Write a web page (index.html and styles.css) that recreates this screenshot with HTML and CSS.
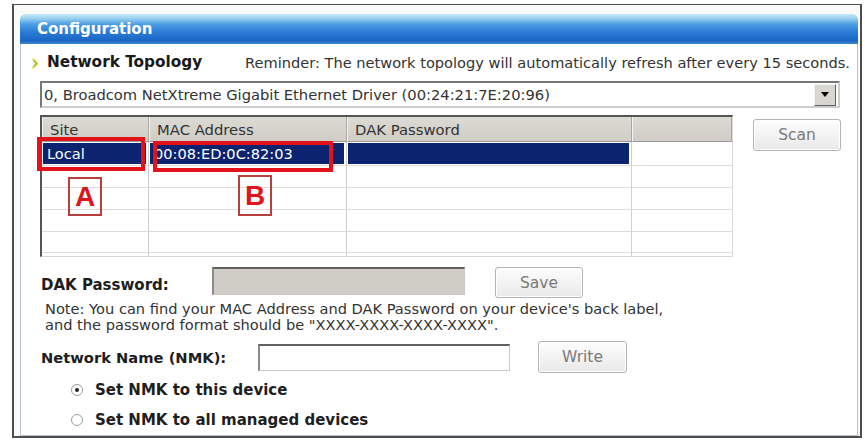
FILE: index.html
```
<!DOCTYPE html>
<html>
<head>
<meta charset="utf-8">
<link rel="stylesheet" href="styles.css">
</head>
<body>
<div class="frame">
  <div class="panel">
    <div class="bar"><span class="bar-title">Configuration</span></div>
    <div class="content">
      <div class="topo-row">
        <svg class="chev" width="9" height="13" viewBox="0 0 9 13"><path d="M1.5 1.5 L6 6.5 L1.5 11.5" fill="none" stroke="#dce670" stroke-width="2.6"/><path d="M2.5 3.5 L5.5 6.5 L2.5 9.5" fill="none" stroke="#9cb82a" stroke-width="1.4"/></svg>
        <span class="topo-title">Network Topology</span>
        <span class="reminder">Reminder: The network topology will automatically refresh after every 15 seconds.</span>
      </div>
      <div class="select">
        <span class="select-text">0, Broadcom NetXtreme Gigabit Ethernet Driver (00:24:21:7E:20:96)</span>
        <span class="select-btn"><span class="tri"></span></span>
      </div>
      <div class="table-area">
        <div class="grid-wrap">
          <div class="grid">
            <div class="hcell">Site</div>
            <div class="hcell">MAC Address</div>
            <div class="hcell">DAK Password</div>
            <div class="hcell"></div>
            <div class="cell sel first"><div class="fill">Local</div></div>
            <div class="cell sel first"><div class="fill">00:08:ED:0C:82:03</div></div>
            <div class="cell sel first"><div class="fill"></div></div>
            <div class="cell first"></div>
            <div class="cell"></div><div class="cell"></div><div class="cell"></div><div class="cell"></div>
            <div class="cell"></div><div class="cell"></div><div class="cell"></div><div class="cell"></div>
            <div class="cell"></div><div class="cell"></div><div class="cell"></div><div class="cell"></div>
            <div class="cell"></div><div class="cell"></div><div class="cell"></div><div class="cell"></div>
            <div class="cell last"></div><div class="cell last"></div><div class="cell last"></div><div class="cell last"></div>
          </div>
          <div class="mark mark-a"></div>
          <div class="mark mark-b"></div>
          <div class="tag tag-a">A</div>
          <div class="tag tag-b">B</div>
        </div>
        <div class="btn btn-scan">Scan</div>
      </div>
      <div class="dak-row">
        <span class="label">DAK Password:</span>
        <span class="input input-dak"></span>
        <span class="btn btn-save">Save</span>
      </div>
      <div class="note">
        <div>Note: You can find your MAC Address and DAK Password on your device's back label,</div>
        <div>and the password format should be "XXXX-XXXX-XXXX-XXXX".</div>
      </div>
      <div class="nmk-row">
        <span class="label">Network Name (NMK):</span>
        <span class="input input-nmk"></span>
        <span class="btn btn-write">Write</span>
      </div>
      <div class="radios">
        <div class="radio-row"><span class="radio on"></span><span class="radio-text">Set NMK to this device</span></div>
        <div class="radio-row"><span class="radio"></span><span class="radio-text">Set NMK to all managed devices</span></div>
      </div>
    </div>
  </div>
</div>
</body>
</html>
```
FILE: styles.css
```
* { box-sizing: border-box; }
html, body { margin: 0; padding: 0; background: #fff; }
body {
  width: 865px; height: 440px; overflow: hidden;
  font-family: "DejaVu Sans", sans-serif;
  color: #2a2a2a;
}
.frame {
  margin: 4px 0 0 12px;
  width: 850px; height: 434px;
  border: 2px solid #4e4e4e;
  border-top-width: 1px;
  padding: 9px 2px 0 6px;
  background: #fafafa;
}
.panel {
  height: 100%;
  border: 1px solid #b9c3cd;
  border-top: none;
  border-radius: 6px 6px 0 0;
  background: #fff;
  display: flex; flex-direction: column;
}
.bar {
  height: 31px;
  margin: 0 -1px;
  border-radius: 6px 6px 0 0;
  background: linear-gradient(to bottom, #c4e8f8 0%, #9dd2f0 14%, #4c9ee4 34%, #2b7cd6 60%, #1a66c6 88%, #3f86cc 100%);
  display: flex; align-items: center;
  padding-left: 17px;
}
.bar-title { color: #fff; font-weight: bold; font-size: 15px; }
.content { padding-left: 10px; display: flex; flex-direction: column; }
.topo-row {
  margin-top: 7px; height: 22px;
  display: flex; align-items: center;
}
.chev { margin-top: 2px; }
.topo-title { margin-left: 7px; width: 198px; font-weight: bold; font-size: 15.3px; color: #1a1a1a; }
.reminder { font-size: 14.6px; color: #333; white-space: nowrap; }
.select {
  margin: 8px 0 0 9px; width: 800px; height: 27px;
  border: 2px solid #777; border-right-color: #ccc; border-bottom-color: #ccc;
  display: flex; align-items: center; justify-content: space-between;
  padding: 0 2px 0 2px;
}
.select-text { font-size: 14.7px; color: #333; }
.select-btn {
  width: 22px; height: 22px;
  background: #d8d6d0;
  border: 1px solid #f4f4f4; border-right-color: #606060; border-bottom-color: #606060;
  display: flex; align-items: center; justify-content: center;
}
.tri { width: 0; height: 0; border-left: 4px solid transparent; border-right: 4px solid transparent; border-top: 5px solid #000; }
.table-area { margin: 7px 0 0 9px; display: flex; align-items: flex-start; gap: 20px; }
.grid-wrap {
  position: relative; width: 693px; height: 142px;
  border-left: 2px solid #555; border-top: 2px solid #555;
  border-right: 1px solid #d8d8d8; border-bottom: 1px solid #d8d8d8;
}
.grid {
  display: grid; grid-template-columns: 107px 198px 285px 1fr;
  grid-template-rows: 25px 24px 22px 22px 22px 21px 1fr;
  height: 100%; overflow: hidden;
}
.hcell {
  background: linear-gradient(#dcdad4, #d0cdc6);
  border-right: 1px solid #a8a6a0; border-left: 1px solid #f2f2f2;
  border-bottom: 1px solid #9a9a9a;
  font-size: 14.8px; color: #333;
  display: flex; align-items: center; padding-left: 7px;
}
.cell { border-right: 1px solid #cfcfcf; border-bottom: 1px solid #dcdcdc; }
.cell:nth-child(4n) { border-right: none; }
.cell.last { border-bottom: none; }
.cell.sel { padding: 1px 2px 1px 1px; }
.fill {
  height: 100%; background: #0c2470; color: #fff;
  font-size: 14.6px; display: flex; align-items: center; padding-left: 4px;
}
.mark { position: absolute; border: 4px solid #e3121b; }
.mark-a { left: -5px; top: 20px; width: 108px; height: 34px; }
.mark-b { left: 111px; top: 24px; width: 180px; height: 31px; }
.tag {
  position: absolute; border: 2px solid #b8403c;
  color: #e0141a; font-family: "Liberation Sans", Arial, sans-serif; font-weight: bold; font-size: 28px;
  display: flex; align-items: center; justify-content: center;
}
.tag-a { left: 26px; top: 60px; width: 34px; height: 39px; }
.tag-b { left: 196px; top: 58px; width: 34px; height: 41px; }
.btn {
  display: flex; align-items: center; justify-content: center;
  border: 1px solid #b4b4b4; border-radius: 3px;
  background: linear-gradient(#fdfdfd, #e9e9e9);
  box-shadow: inset 0 0 0 1px #fff;
  color: #7a7a7a; font-size: 15.5px;
}
.btn-scan { width: 88px; height: 32px; margin-top: 4px; }
.dak-row { margin: 10px 0 0 10px; height: 31px; display: flex; align-items: flex-start; }
.label { font-weight: bold; font-size: 15px; color: #1e1e1e; white-space: nowrap; }
.dak-row .label { margin-top: 9px; width: 171px; }
.input { display: block; border: 1px solid #c8c8c8; border-top: 2px solid #606060; border-left: 2px solid #8a8a8a; }
.input-dak { width: 253px; height: 28px; background: #cfcdc6; }
.btn-save { margin-left: 30px; width: 88px; height: 31px; }
.note { margin: 3px 0 0 14px; font-size: 14.6px; color: #333; line-height: 16px; white-space: nowrap; }
.nmk-row { margin: 8px 0 0 10px; height: 32px; display: flex; align-items: center; }
.nmk-row .label { width: 217px; font-size: 14.7px; }
.input-nmk { width: 252px; height: 27px; background: #fff; }
.btn-write { margin-left: 28px; width: 89px; height: 32px; }
.radios { margin: 2px 0 0 40px; display: flex; flex-direction: column; }
.radio-row { height: 30px; display: flex; align-items: center; }
.radio {
  width: 12px; height: 12px; border-radius: 50%;
  border: 1px solid #9c9c9c; background: #fff;
  display: flex; align-items: center; justify-content: center;
}
.radio.on::after { content: ""; width: 4px; height: 4px; border-radius: 50%; background: #222; }
.radio-text { margin-left: 12px; font-weight: bold; font-size: 15px; color: #1e1e1e; }
```
